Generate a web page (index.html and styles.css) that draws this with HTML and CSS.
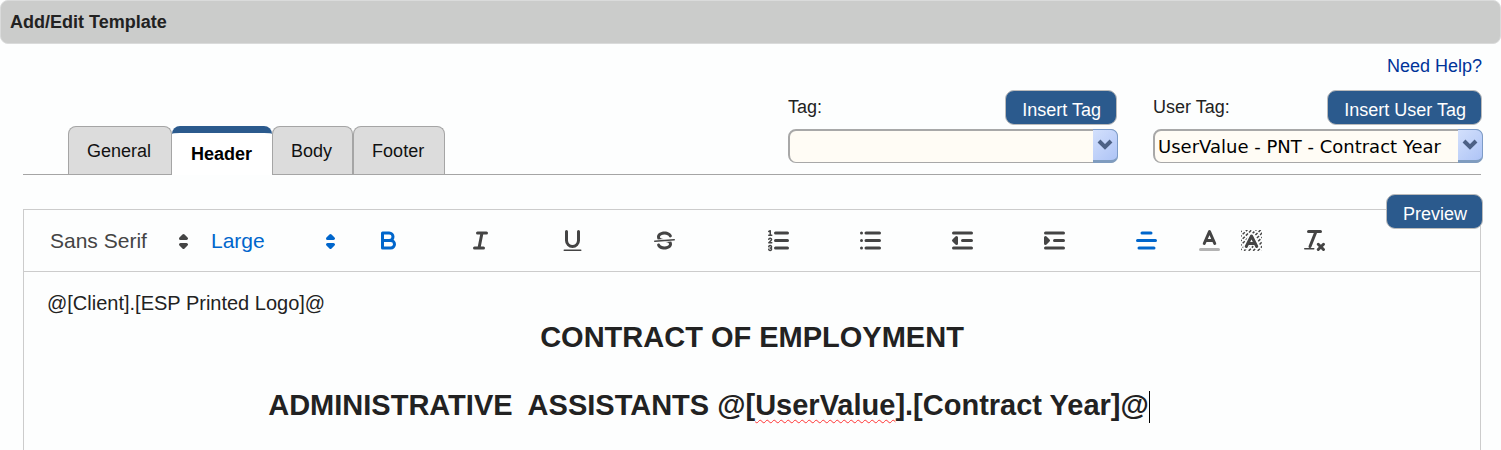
FILE: index.html
```html
<!doctype html>
<html lang="en">
    <head>
        <meta charset="UTF-8" />
        <meta name="viewport" content="width=device-width, initial-scale=1.0" />
        <title>Add/Edit Template</title>
        <link rel="stylesheet" href="styles.css">
    </head>
    <body>
        <h1 class="title-bar">Add/Edit Template</h1>
        <main class="page">
            <div class="help-row">
                <a href="#help">Need Help?</a>
            </div>
            <div class="top-row">
                <div class="tabs" role="tablist">
                    <button class="tab" role="tab">General</button>
                    <button class="tab active" role="tab" aria-selected="true">Header</button>
                    <button class="tab" role="tab">Body</button>
                    <button class="tab" role="tab">Footer</button>
                </div>
                <div class="tag-fields">
                    <div class="tag-field">
                        <div class="tag-head">
                            <label for="tag">Tag:</label>
                            <button class="btn">Insert Tag</button>
                        </div>
                        <div class="combo">
                            <select id="tag">
                                <option></option>
                            </select>
                            <span class="combo-arrow">
                                <svg viewBox="0 0 16 12"><path d="M2 2l6 6 6-6" /></svg>
                            </span>
                        </div>
                    </div>
                    <div class="tag-field">
                        <div class="tag-head">
                            <label for="userTag">User Tag:</label>
                            <button class="btn">Insert User Tag</button>
                        </div>
                        <div class="combo">
                            <select id="userTag">
                                <option>UserValue - PNT - Contract Year</option>
                            </select>
                            <span class="combo-arrow">
                                <svg viewBox="0 0 16 12"><path d="M2 2l6 6 6-6" /></svg>
                            </span>
                        </div>
                    </div>
                </div>
            </div>

            <div class="editor">
                <button class="btn preview">Preview</button>
                <div class="toolbar">
                    <div class="picker font">
                        <select aria-label="Font">
                            <option>Sans Serif</option>
                        </select>
                        <svg viewBox="0 0 18 18"><polygon points="7 11 9 13 11 11" /><polygon points="7 7 9 5 11 7" /></svg>
                    </div>
                    <div class="picker size">
                        <select aria-label="Size">
                            <option>Large</option>
                        </select>
                        <svg viewBox="0 0 18 18"><polygon points="7 11 9 13 11 11" /><polygon points="7 7 9 5 11 7" /></svg>
                    </div>
                    <div class="group">
                        <button class="tool on" aria-label="Bold">
                            <svg viewBox="0 0 18 18"><path d="M5,4H9.5A2.5,2.5,0,0,1,12,6.5v0A2.5,2.5,0,0,1,9.5,9H5V4Z" /><path d="M5,9h5.5A2.5,2.5,0,0,1,13,11.5v0A2.5,2.5,0,0,1,10.5,14H5V9Z" /></svg>
                        </button>
                        <button class="tool" aria-label="Italic">
                            <svg viewBox="0 0 18 18"><path d="M7 4h6M5 14h6M8 14l2-10" /></svg>
                        </button>
                        <button class="tool" aria-label="Underline">
                            <svg viewBox="0 0 18 18"><path d="M5,3V9a4.012,4.012,0,0,0,4,4H9a4.012,4.012,0,0,0,4-4V3" /><rect class="fill" x="3" y="15" width="12" height="1" rx="0.5" /></svg>
                        </button>
                        <button class="tool" aria-label="Strike">
                            <svg viewBox="0 0 18 18"><path class="thin" d="M15.5 8.5l-13 1" /><path class="fill" d="M9.007,8C6.542,7.791,6,7.519,6,6.5,6,5.792,7.283,5,9,5c1.571,0,2.765.679,2.969,1.309a1,1,0,0,0,1.9-.617C13.356,4.106,11.354,3,9,3,6.2,3,4,4.538,4,6.5a3.2,3.2,0,0,0,.5,1.843Z" /><path class="fill" d="M8.984,10C11.457,10.208,12,10.479,12,11.5c0,0.708-1.283,1.5-3,1.5-1.571,0-2.765-.679-2.969-1.309a1,1,0,1,0-1.9.617C4.644,13.894,6.646,15,9,15c2.8,0,5-1.538,5-3.5a3.2,3.2,0,0,0-.5-1.843Z" /></svg>
                        </button>
                    </div>
                    <div class="group">
                        <button class="tool" aria-label="Ordered list">
                            <svg viewBox="0 0 18 18"><path d="M7 4h8M7 9h8M7 14h8" /><path class="thin" d="M2.5 5.5h2M3.5 5.5v-3L2.5 3M4.5 10.5h-2c0-.4 1.9-1.2 1.9-2.1a.96.96 0 0 0-1.9-.2M2.5 14.9a.96.96 0 0 0 1.9-.2c0-.4-.3-.7-1-.7.7 0 1-.3 1-.7a.96.96 0 0 0-1.9-.2" /></svg>
                        </button>
                        <button class="tool" aria-label="Bullet list">
                            <svg viewBox="0 0 18 18"><path d="M6 4h9M6 9h9M6 14h9M3 4h0M3 9h0M3 14h0" /></svg>
                        </button>
                        <button class="tool" aria-label="Outdent">
                            <svg viewBox="0 0 18 18"><path d="M3 14h12M3 4h12M9 9h6M5 7v4L3 9z" /><path class="fill" d="M5 7v4L3 9z" /></svg>
                        </button>
                        <button class="tool" aria-label="Indent">
                            <svg viewBox="0 0 18 18"><path d="M3 14h12M3 4h12M9 9h6M3 7v4l2-2z" /><path class="fill" d="M3 7v4l2-2z" /></svg>
                        </button>
                        <button class="tool on" aria-label="Align">
                            <svg viewBox="0 0 18 18"><path d="M15 9H3M14 14H4M12 4H6" /></svg>
                        </button>
                    </div>
                    <div class="group colors">
                        <button class="tool" aria-label="Text color">
                            <svg viewBox="0 0 18 18"><path class="faded" d="M3 15h12" /><path d="M5.5 11L9 3l3.5 8M11.6 9H6.4" /></svg>
                        </button>
                        <button class="tool" aria-label="Background color">
                            <svg viewBox="0 0 18 18"><path class="thin hatch" d="M1 4l3-3M1 7l6-6M1 10l9-9M1 13L13 1M1 16L16 1M2 18L18 2M5 18L18 5M8 18L18 8M11 18l7-7M14 18l4-4" /><path class="halo" d="M5.5 13L9 6l3.5 7" /><path d="M5.5 13L9 6l3.5 7M11.6 11H6.4" /></svg>
                        </button>
                    </div>
                    <button class="tool" aria-label="Clear formatting">
                        <svg viewBox="0 0 18 18"><path d="M5 3h8M6 13L9.8 3.5" /><path d="M11.5 11.5l3.5 3.5M15 11.5l-3.5 3.5" /><rect class="fill" x="2" y="14" width="7" height="1" rx="0.5" /></svg>
                    </button>
                </div>
                <div class="content" contenteditable="true" spellcheck="false">
                    <p>@[Client].[ESP Printed Logo]@</p>
                    <p class="large">CONTRACT OF EMPLOYMENT</p>
                    <p class="large"><br /></p>
                    <p class="large indented">ADMINISTRATIVE&nbsp; ASSISTANTS @[<span class="misspelled">UserValue</span>].[Contract Year]@<span class="caret"></span></p>
                </div>
            </div>
        </main>
    </body>
</html>
```
FILE: styles.css
```css
body {
    margin: 0;
    display: flex;
    flex-direction: column;
    min-height: 100vh;
    font-family: Arial, "Liberation Sans", sans-serif;
    font-size: 18px;
    line-height: 22px;
    background-color: #fdfefe;
    color: #222;
}
button,
select {
    font: inherit;
    cursor: pointer;
}
.title-bar {
    margin: 0;
    padding: 10px 9px;
    border: 1px solid #dadbdb;
    border-radius: 8px;
    background-color: #cbcccb;
    font-size: 18px;
    font-weight: bold;
}
.page {
    flex: 1;
    display: flex;
    flex-direction: column;
    padding: 11px 18px 0 23px;
}
.help-row {
    text-align: right;
    padding-right: 1px;
}
.help-row a {
    color: #039;
    text-decoration: none;
}
.top-row {
    display: flex;
    justify-content: space-between;
    align-items: flex-end;
    margin: 13px 2px 0 0;
    border-bottom: 1px solid #a5a5a5;
}
.tabs {
    display: flex;
    padding-left: 45px;
}
.tab {
    height: 48px;
    padding: 0 20px 0 18px;
    border: 1px solid #a5a5a5;
    border-bottom: none;
    border-radius: 8px 8px 0 0;
    background-color: #dcdcdc;
    color: #111;
}
.tab.active {
    height: 49px;
    margin-bottom: -1px;
    border-top: 7px solid #2b5a8d;
    border-left: none;
    border-right: none;
    padding: 0 20px 0 19px;
    background-color: #fff;
    color: #000;
    font-weight: bold;
}
.tag-fields {
    display: flex;
    gap: 35px;
    margin-right: -2px;
    padding-bottom: 11px;
}
.tag-field {
    width: 330px;
}
.tag-head {
    display: flex;
    justify-content: space-between;
    align-items: center;
    padding-right: 1px;
    margin-bottom: 4px;
}
.tag-head label {
    padding-bottom: 2px;
}
.btn {
    height: 35px;
    padding: 4px 15px 0 16px;
    border: 1px solid #bbb;
    border-radius: 9px;
    background-color: #2b5a8d;
    color: #fff;
}
.combo {
    position: relative;
}
.combo select {
    display: block;
    width: 100%;
    height: 34px;
    padding: 0 26px 0 3px;
    appearance: none;
    border: 2px solid #a8a8a8;
    border-bottom-width: 1px;
    border-radius: 8px;
    background-color: #fffcf5;
    font-family: Verdana, "DejaVu Sans", sans-serif;
    color: #000;
}
.combo-arrow {
    position: absolute;
    top: 0;
    right: 0;
    bottom: 0;
    width: 25px;
    display: flex;
    align-items: center;
    justify-content: center;
    box-sizing: border-box;
    border: 1px solid #7d9cc8;
    border-left: none;
    border-bottom: 3px solid #7f9cbf;
    border-radius: 0 7px 7px 0;
    background: linear-gradient(135deg, #d3e0fc, #aec4f6);
    pointer-events: none;
}
.combo-arrow svg {
    width: 16px;
    height: 12px;
    fill: none;
    stroke: #4d6185;
    stroke-width: 4;
}
.editor {
    position: relative;
    flex: 1;
    margin: 34px 2px 0 0;
    border: 1px solid #ccc;
    border-bottom: none;
}
.preview {
    position: absolute;
    top: -16px;
    right: -3px;
}
.toolbar {
    display: flex;
    align-items: center;
    height: 61px;
    padding-left: 26px;
    border-bottom: 1px solid #ccc;
}
.picker {
    position: relative;
    color: #444;
}
.picker select {
    width: 100%;
    padding: 0;
    appearance: none;
    border: none;
    background: none;
    font-size: 21px;
    line-height: 26px;
    color: inherit;
}
.picker svg {
    position: absolute;
    top: 0;
    right: -7px;
    width: 27px;
    height: 27px;
    fill: currentColor;
    stroke: currentColor;
    stroke-width: 2;
    stroke-linejoin: round;
    pointer-events: none;
}
.font {
    width: 140px;
    margin-right: 21px;
}
.size {
    width: 126px;
    margin-right: 38px;
    color: #06c;
}
.group {
    display: flex;
    gap: 65px;
    margin-right: 87px;
}
.group + .group {
    margin-right: 36px;
}
.group.colors {
    gap: 15px;
}
.tool {
    width: 27px;
    height: 27px;
    padding: 0;
    border: none;
    background: none;
    color: #444;
}
.tool.on {
    color: #06c;
}
.tool svg {
    display: block;
    width: 27px;
    height: 27px;
    fill: none;
    stroke: currentColor;
    stroke-width: 2;
    stroke-linecap: round;
    stroke-linejoin: round;
}
.tool .thin {
    stroke-width: 1;
}
.tool .fill {
    fill: currentColor;
    stroke: none;
}
.tool .faded {
    opacity: 0.4;
}
.tool .hatch {
    stroke-linecap: butt;
    stroke-dasharray: 2 1;
    clip-path: polygon(2px 2px, 16px 2px, 16px 16px, 2px 16px);
    clip-path: view-box inset(2px);
}
.tool .halo {
    stroke: #fdfefe;
    stroke-width: 4;
}
.content {
    padding: 15px 23px 0;
    outline: none;
}
.content p {
    margin: 0;
    font-size: 20px;
    line-height: 33px;
}
.content .large {
    font-size: 29px;
    line-height: 34px;
    font-weight: bold;
    text-align: center;
}
.content .indented {
    padding-right: 86px;
}
.misspelled {
    text-decoration: underline wavy #f33 1px;
    text-underline-offset: 4px;
}
.caret {
    display: inline-block;
    height: 32px;
    border-left: 1px solid #000;
    vertical-align: middle;
}
```
